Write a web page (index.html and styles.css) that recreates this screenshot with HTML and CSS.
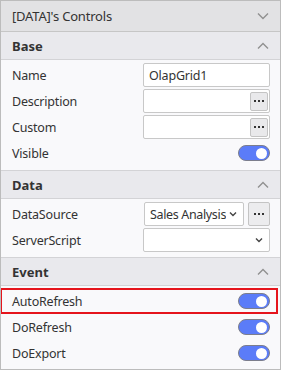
FILE: index.html
```html
<!DOCTYPE html>
<html lang="en">
<head>
    <meta charset="UTF-8">
    <title>[DATA]'s Controls</title>
    <link rel="stylesheet" href="styles.css">
</head>
<body>
    <div class="panel">
        <div class="title">
            <span>[DATA]'s Controls</span>
            <svg class="chev" width="12" height="8" viewBox="0 0 12 8"><path d="M1 1.5 6 6.5 11 1.5" /></svg>
        </div>

        <div class="sec-head first">
            <span>Base</span>
            <svg class="chev" width="12" height="8" viewBox="0 0 12 8"><path d="M1 6.5 6 1.5 11 6.5" /></svg>
        </div>
        <div class="sec-body">
            <div class="row">
                <span class="label">Name</span>
                <div class="field"><span class="val">OlapGrid1</span></div>
            </div>
            <div class="row">
                <span class="label">Description</span>
                <div class="field"><span class="val"></span><span class="dots"><svg width="10" height="2" viewBox="0 0 10 2"><rect x="0" y="0" width="2" height="2"/><rect x="4" y="0" width="2" height="2"/><rect x="8" y="0" width="2" height="2"/></svg></span></div>
            </div>
            <div class="row">
                <span class="label">Custom</span>
                <div class="field"><span class="val"></span><span class="dots"><svg width="10" height="2" viewBox="0 0 10 2"><rect x="0" y="0" width="2" height="2"/><rect x="4" y="0" width="2" height="2"/><rect x="8" y="0" width="2" height="2"/></svg></span></div>
            </div>
            <div class="row">
                <span class="label">Visible</span>
                <span class="toggle"></span>
            </div>
        </div>

        <div class="sec-head">
            <span>Data</span>
            <svg class="chev" width="12" height="8" viewBox="0 0 12 8"><path d="M1 6.5 6 1.5 11 6.5" /></svg>
        </div>
        <div class="sec-body">
            <div class="row">
                <span class="label">DataSource</span>
                <div class="combo">
                    <div class="field select short"><span class="val">Sales Analysis</span><svg class="dd" width="8" height="6" viewBox="0 0 8 6"><path d="M1 1.5 4 4.5 7 1.5" /></svg></div>
                    <span class="btn"><svg width="10" height="2" viewBox="0 0 10 2"><rect x="0" y="0" width="2" height="2"/><rect x="4" y="0" width="2" height="2"/><rect x="8" y="0" width="2" height="2"/></svg></span>
                </div>
            </div>
            <div class="row">
                <span class="label">ServerScript</span>
                <div class="field select"><span class="val"></span><svg class="dd" width="8" height="6" viewBox="0 0 8 6"><path d="M1 1.5 4 4.5 7 1.5" /></svg></div>
            </div>
        </div>

        <div class="sec-head">
            <span>Event</span>
            <svg class="chev" width="12" height="8" viewBox="0 0 12 8"><path d="M1 6.5 6 1.5 11 6.5" /></svg>
        </div>
        <div class="sec-body last">
            <div class="row selected">
                <span class="label">AutoRefresh</span>
                <span class="toggle"></span>
            </div>
            <div class="row">
                <span class="label">DoRefresh</span>
                <span class="toggle"></span>
            </div>
            <div class="row">
                <span class="label">DoExport</span>
                <span class="toggle"></span>
            </div>
        </div>
    </div>
</body>
</html>
```

FILE: styles.css
```css
body { margin: 0; background: #fff; font-family: "Noto Sans", "Noto Sans CJK KR", sans-serif; color: #333; }
.panel { width: 281px; height: 370px; box-sizing: border-box; border: 1px solid #bcbcbc; background: #f9f9fb; overflow: hidden; }
.title { height: 30px; border-bottom: 1px solid #c6c6c6; background: #e2e2e4; display: flex; align-items: center; justify-content: space-between; padding: 0 11px 0 11px; font-size: 13px; letter-spacing: -0.2px; }
.chev { fill: none; stroke: #909090; stroke-width: 1.4; }
.sec-head { height: 27px; border-top: 1px solid #d3d3d6; border-bottom: 1px solid #d3d3d6; background: #e9e9ed; display: flex; align-items: center; justify-content: space-between; padding: 0 11px; font-size: 13px; font-weight: bold; }
.sec-head.first { border-top: none; }
.sec-body { padding: 2px 0 4px; background: #f9f9fb; }
.sec-body.last { padding-bottom: 3px; }
.row { height: 26px; display: flex; align-items: center; justify-content: space-between; padding: 0 10px 0 11px; font-size: 12.5px; letter-spacing: -0.2px; position: relative; }
.row.selected::after { content: ""; position: absolute; top: 0; bottom: 0; left: -1px; right: 2px; border: 2px solid #e5141c; }
.field { width: 127px; height: 24px; box-sizing: border-box; border: 1px solid #c8c8c8; border-radius: 2px; background: #fff; display: flex; align-items: center; justify-content: space-between; padding: 0 1px 0 5px; }
.val { font-size: 12.5px; color: #333; white-space: nowrap; overflow: hidden; }
.dots { width: 18px; height: 19px; box-sizing: border-box; border: 1px solid #c4c4c4; border-radius: 2px; background: #e9e9eb; display: flex; align-items: center; justify-content: center; }
.dots svg, .btn svg { fill: #333; }
.combo { display: flex; gap: 4px; }
.field.short { width: 100px; padding-right: 4px; }
.field.select { padding-right: 6px; }
.field.short .val { letter-spacing: -0.35px; }
.dd { fill: none; stroke: #444; stroke-width: 1.4; flex: none; }
.btn { width: 22px; height: 24px; box-sizing: border-box; border: 1px solid #c4c4c4; border-radius: 2px; background: #ececee; display: flex; align-items: center; justify-content: center; }
.toggle { width: 32px; height: 16px; box-sizing: border-box; border: 1px solid #7c7e8c; border-radius: 8px; background: #5b7cf8; position: relative; }
.toggle::after { content: ""; position: absolute; right: 2px; top: 1.5px; width: 11px; height: 11px; border-radius: 50%; background: #fff; }
```
